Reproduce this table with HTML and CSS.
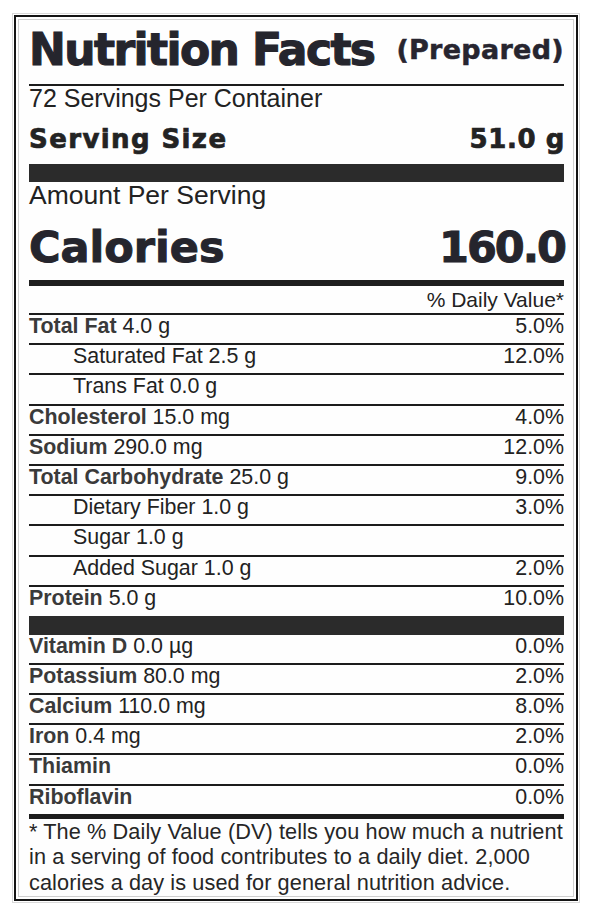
FILE: index.html
```html
<!DOCTYPE html>
<html lang="en">
<head>
<meta charset="utf-8">
<title>Nutrition Facts</title>
<link rel="stylesheet" href="styles.css">
</head>
<body>
<div class="frame">
  <section class="label">
    <header class="title-row">
      <h1 class="title">Nutrition Facts</h1>
      <span class="prepared">(Prepared)</span>
    </header>
    <div class="servings">72 Servings Per Container</div>
    <div class="serving-size"><span class="ss-label">Serving Size</span><span class="ss-val">51.0 g</span></div>
    <div class="bar"></div>
    <div class="amount">Amount Per Serving</div>
    <div class="calories"><span>Calories</span><span class="cal-val">160.0</span></div>
    <div class="dv-head">% Daily Value*</div>

    <div class="row"><span><b>Total Fat</b> 4.0 g</span><span>5.0%</span></div>
    <div class="row indent"><span>Saturated Fat 2.5 g</span><span>12.0%</span></div>
    <div class="row indent"><span>Trans Fat 0.0 g</span><span></span></div>
    <div class="row"><span><b>Cholesterol</b> 15.0 mg</span><span>4.0%</span></div>
    <div class="row"><span><b>Sodium</b> 290.0 mg</span><span>12.0%</span></div>
    <div class="row"><span><b>Total Carbohydrate</b> 25.0 g</span><span>9.0%</span></div>
    <div class="row indent"><span>Dietary Fiber 1.0 g</span><span>3.0%</span></div>
    <div class="row indent"><span>Sugar 1.0 g</span><span></span></div>
    <div class="row indent"><span>Added Sugar 1.0 g</span><span>2.0%</span></div>
    <div class="row row-protein"><span><b>Protein</b> 5.0 g</span><span>10.0%</span></div>
    <div class="bar bar-mid"></div>
    <div class="row"><span><b>Vitamin D</b> 0.0 µg</span><span>0.0%</span></div>
    <div class="row"><span><b>Potassium</b> 80.0 mg</span><span>2.0%</span></div>
    <div class="row"><span><b>Calcium</b> 110.0 mg</span><span>8.0%</span></div>
    <div class="row"><span><b>Iron</b> 0.4 mg</span><span>2.0%</span></div>
    <div class="row"><span><b>Thiamin</b></span><span>0.0%</span></div>
    <div class="row row-last"><span><b>Riboflavin</b></span><span>0.0%</span></div>

    <p class="footnote">* The % Daily Value (DV) tells you how much a nutrient<br>in a serving of food contributes to a daily diet. 2,000<br>calories a day is used for general nutrition advice.</p>
  </section>
</div>
</body>
</html>
```

FILE: styles.css
```css
html, body {
  margin: 0;
  padding: 0;
  background: #ffffff;
}

body {
  font-family: "Liberation Sans", Arial, sans-serif;
  color: #222222;
}

.frame {
  width: 568px;
  margin: 13px 0 0 12px;
  padding: 1px;
  border: 1px solid #d9d9d9;
  box-sizing: border-box;
}

.label {
  border: 2px solid #141414;
  padding: 9px 12px 4px 13px;
  box-shadow: inset 0 0 0 2px #ffffff, inset 0 0 0 3px #cfcfcf;
  background: #fefefe;
}

.title-row {
  display: flex;
  justify-content: space-between;
  align-items: flex-start;
  padding-bottom: 10px;
  border-bottom: 2px solid #1c1c1c;
}

.title {
  margin: 0;
  font-family: "DejaVu Sans", sans-serif;
  font-weight: bold;
  font-size: 44px;
  line-height: 48px;
  letter-spacing: -1.6px;
  color: #25252d;
  -webkit-text-stroke: 1.1px #25252d;
}

.prepared {
  margin-top: 4px;
  font-family: "DejaVu Sans", sans-serif;
  font-weight: bold;
  font-size: 27px;
  line-height: 40px;
  letter-spacing: 0.3px;
  color: #27252f;
  -webkit-text-stroke: 0.5px #27252f;
}

.servings {
  font-size: 25px;
  line-height: 25px;
}

.serving-size {
  display: flex;
  justify-content: space-between;
  align-items: baseline;
  padding: 11px 0 8px;
  font-family: "DejaVu Sans", sans-serif;
  font-weight: bold;
  font-size: 26px;
  line-height: 34px;
  color: #232323;
  -webkit-text-stroke: 0.7px #232323;
}

.ss-label {
  letter-spacing: 1.4px;
}

.ss-val {
  letter-spacing: 0.6px;
  margin-right: -1px;
}

.bar {
  height: 18px;
  background: #2b2b2b;
}

.bar-mid {
  height: 19px;
}

.amount {
  font-size: 26.5px;
  line-height: 26px;
}

.calories {
  display: flex;
  justify-content: space-between;
  align-items: baseline;
  padding: 15px 0 9px;
  border-bottom: 6px solid #1f1f1f;
  font-family: "DejaVu Sans", sans-serif;
  font-weight: bold;
  font-size: 43px;
  line-height: 48px;
  color: #25252d;
  -webkit-text-stroke: 1px #25252d;
}

.cal-val {
  letter-spacing: -2px;
  margin-right: -1px;
}

.dv-head {
  padding-top: 1px;
  font-size: 21px;
  line-height: 26px;
  text-align: right;
  border-bottom: 2px solid #1c1c1c;
}

.row {
  display: flex;
  justify-content: space-between;
  align-items: flex-start;
  height: 28.2px;
  font-size: 21.4px;
  line-height: 23px;
  border-bottom: 2px solid #1c1c1c;
}

.row b {
  font-weight: bold;
  color: #3a3a3a;
}

.indent {
  padding-left: 44px;
}

.row-protein {
  height: 29px;
  border-bottom: 0;
}

.row-last {
  height: 28.2px;
  border-bottom: 5px solid #1c1c1c;
}

.footnote {
  margin: 0;
  font-size: 21.7px;
  line-height: 25.5px;
  letter-spacing: 0.1px;
  color: #262626;
}
```
